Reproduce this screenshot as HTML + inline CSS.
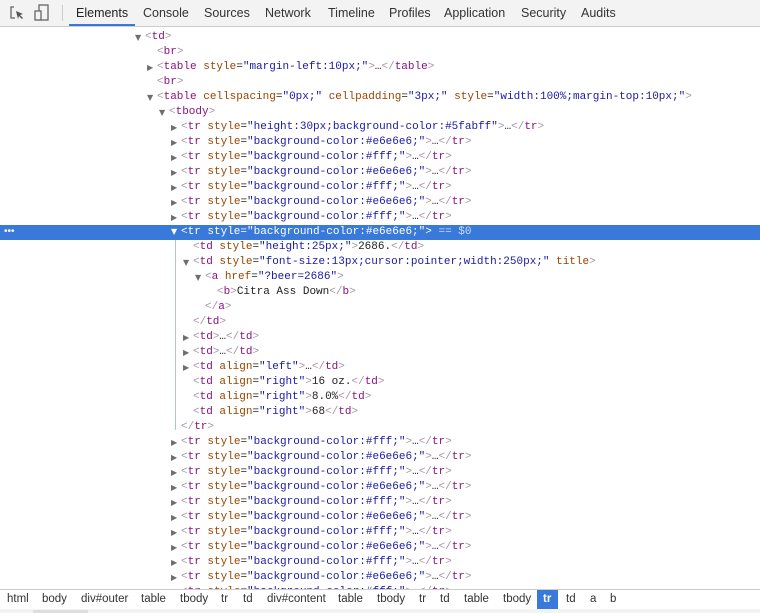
<!DOCTYPE html>
<html><head><meta charset="utf-8"><style>
body{margin:0;width:760px;height:613px;overflow:hidden;background:#fff;position:relative;font-family:"Liberation Sans",sans-serif}
#tabs{position:absolute;left:0;top:0;width:760px;height:26px;background:#f3f3f3;border-bottom:1px solid #ccc}
.tab{position:absolute;top:6px;font-size:12.5px;color:#333}
.l{position:absolute;font-family:"Liberation Mono",monospace;font-size:11px;line-height:15px;height:15px;white-space:pre;color:#222}
.g{color:#a894a6}.t{color:#881280}.a{color:#994500}.v{color:#1a1aa6}
.tri{position:absolute;font-size:8px;color:#6e6e6e;font-family:"DejaVu Sans",sans-serif}
#sel{position:absolute;left:0;top:225px;width:760px;height:15px;background:#3879d9}
#sel .l,#sel .l span{color:#fff}
#bar{position:absolute;left:0;top:589px;width:760px;height:19px;background:#fff;border-top:1px solid #ccc;border-bottom:1px solid #ccc}
.c{position:absolute;top:3px;font-size:11.5px;color:#333}
</style></head><body>
<div id="tabs">
<svg style="position:absolute;left:9px;top:5px" width="16" height="16" viewBox="0 0 16 16"><path d="M5 2H2v11h4" fill="none" stroke="#666" stroke-width="1.3"/><path d="M7 6l7 3-3 1 3 3-1 1-3-3-1 3z" fill="#555"/></svg>
<svg style="position:absolute;left:34px;top:4px" width="16" height="18" viewBox="0 0 16 18"><rect x="5" y="1" width="9" height="15" fill="none" stroke="#666" stroke-width="1.3"/><rect x="1" y="7" width="6" height="9" fill="#f3f3f3" stroke="#666" stroke-width="1.3"/></svg>
<div style="position:absolute;left:62px;top:5px;width:1px;height:16px;background:#ccc"></div>
<div class="tab" style="left:76px;color:#222">Elements</div>
<div style="position:absolute;left:69px;top:24px;width:66px;height:2px;background:#3879d9"></div>
<div class="tab" style="left:143px">Console</div>
<div class="tab" style="left:204px">Sources</div>
<div class="tab" style="left:265px">Network</div>
<div class="tab" style="left:328px">Timeline</div>
<div class="tab" style="left:389px">Profiles</div>
<div class="tab" style="left:444px">Application</div>
<div class="tab" style="left:521px">Security</div>
<div class="tab" style="left:581px">Audits</div>
</div>

<div id="sel"><div style="position:absolute;left:4px;top:0;color:#fff;font-size:10px;line-height:13px">•••</div>
<div class="tri" style="left:171px;top:2px;color:#fff">▼</div>
<div class="l" style="left:181px;top:0">&lt;tr style="<b style="font-weight:normal;color:#fff">background-color:#e6e6e6;</b>"&gt; <span style="color:#c9dbf5">== $0</span></div></div>
<div style="position:absolute;left:175px;top:240px;width:1px;height:190px;background:#a8c4ec"></div>

<div class="tri" style="left:135px;top:33px">▼</div>
<div class="l" style="left:145px;top:30px"><span class="g">&lt;</span><span class="t">td</span><span class="g">&gt;</span></div>
<div class="l" style="left:157px;top:45px"><span class="g">&lt;</span><span class="t">br</span><span class="g">&gt;</span></div>
<div class="tri" style="left:147px;top:63px">▶</div>
<div class="l" style="left:157px;top:60px"><span class="g">&lt;</span><span class="t">table</span> <span class="a">style</span>=<span class="v">"margin-left:10px;"</span><span class="g">&gt;</span>…<span class="g">&lt;/</span><span class="t">table</span><span class="g">&gt;</span></div>
<div class="l" style="left:157px;top:75px"><span class="g">&lt;</span><span class="t">br</span><span class="g">&gt;</span></div>
<div class="tri" style="left:147px;top:93px">▼</div>
<div class="l" style="left:157px;top:90px"><span class="g">&lt;</span><span class="t">table</span> <span class="a">cellspacing</span>=<span class="v">"0px;"</span> <span class="a">cellpadding</span>=<span class="v">"3px;"</span> <span class="a">style</span>=<span class="v">"width:100%;margin-top:10px;"</span><span class="g">&gt;</span></div>
<div class="tri" style="left:159px;top:108px">▼</div>
<div class="l" style="left:169px;top:105px"><span class="g">&lt;</span><span class="t">tbody</span><span class="g">&gt;</span></div>

<div class="tri" style="left:171px;top:123px">▶</div><div class="l" style="left:181px;top:120px"><span class="g">&lt;</span><span class="t">tr</span> <span class="a">style</span>=<span class="v">"height:30px;background-color:#5fabff"</span><span class="g">&gt;</span>…<span class="g">&lt;/</span><span class="t">tr</span><span class="g">&gt;</span></div>
<div class="tri" style="left:171px;top:138px">▶</div><div class="l" style="left:181px;top:135px"><span class="g">&lt;</span><span class="t">tr</span> <span class="a">style</span>=<span class="v">"background-color:#e6e6e6;"</span><span class="g">&gt;</span>…<span class="g">&lt;/</span><span class="t">tr</span><span class="g">&gt;</span></div>
<div class="tri" style="left:171px;top:153px">▶</div><div class="l" style="left:181px;top:150px"><span class="g">&lt;</span><span class="t">tr</span> <span class="a">style</span>=<span class="v">"background-color:#fff;"</span><span class="g">&gt;</span>…<span class="g">&lt;/</span><span class="t">tr</span><span class="g">&gt;</span></div>
<div class="tri" style="left:171px;top:168px">▶</div><div class="l" style="left:181px;top:165px"><span class="g">&lt;</span><span class="t">tr</span> <span class="a">style</span>=<span class="v">"background-color:#e6e6e6;"</span><span class="g">&gt;</span>…<span class="g">&lt;/</span><span class="t">tr</span><span class="g">&gt;</span></div>
<div class="tri" style="left:171px;top:183px">▶</div><div class="l" style="left:181px;top:180px"><span class="g">&lt;</span><span class="t">tr</span> <span class="a">style</span>=<span class="v">"background-color:#fff;"</span><span class="g">&gt;</span>…<span class="g">&lt;/</span><span class="t">tr</span><span class="g">&gt;</span></div>
<div class="tri" style="left:171px;top:198px">▶</div><div class="l" style="left:181px;top:195px"><span class="g">&lt;</span><span class="t">tr</span> <span class="a">style</span>=<span class="v">"background-color:#e6e6e6;"</span><span class="g">&gt;</span>…<span class="g">&lt;/</span><span class="t">tr</span><span class="g">&gt;</span></div>
<div class="tri" style="left:171px;top:213px">▶</div><div class="l" style="left:181px;top:210px"><span class="g">&lt;</span><span class="t">tr</span> <span class="a">style</span>=<span class="v">"background-color:#fff;"</span><span class="g">&gt;</span>…<span class="g">&lt;/</span><span class="t">tr</span><span class="g">&gt;</span></div>

<div class="l" style="left:193px;top:240px"><span class="g">&lt;</span><span class="t">td</span> <span class="a">style</span>=<span class="v">"height:25px;"</span><span class="g">&gt;</span>2686.<span class="g">&lt;/</span><span class="t">td</span><span class="g">&gt;</span></div>
<div class="tri" style="left:183px;top:258px">▼</div><div class="l" style="left:193px;top:255px"><span class="g">&lt;</span><span class="t">td</span> <span class="a">style</span>=<span class="v">"font-size:13px;cursor:pointer;width:250px;"</span> <span class="a">title</span><span class="g">&gt;</span></div>
<div class="tri" style="left:195px;top:273px">▼</div><div class="l" style="left:205px;top:270px"><span class="g">&lt;</span><span class="t">a</span> <span class="a">href</span>=<span class="v">"?beer=2686"</span><span class="g">&gt;</span></div>
<div class="l" style="left:217px;top:285px"><span class="g">&lt;</span><span class="t">b</span><span class="g">&gt;</span>Citra Ass Down<span class="g">&lt;/</span><span class="t">b</span><span class="g">&gt;</span></div>
<div class="l" style="left:205px;top:300px"><span class="g">&lt;/</span><span class="t">a</span><span class="g">&gt;</span></div>
<div class="l" style="left:193px;top:315px"><span class="g">&lt;/</span><span class="t">td</span><span class="g">&gt;</span></div>
<div class="tri" style="left:183px;top:333px">▶</div><div class="l" style="left:193px;top:330px"><span class="g">&lt;</span><span class="t">td</span><span class="g">&gt;</span>…<span class="g">&lt;/</span><span class="t">td</span><span class="g">&gt;</span></div>
<div class="tri" style="left:183px;top:348px">▶</div><div class="l" style="left:193px;top:345px"><span class="g">&lt;</span><span class="t">td</span><span class="g">&gt;</span>…<span class="g">&lt;/</span><span class="t">td</span><span class="g">&gt;</span></div>
<div class="tri" style="left:183px;top:363px">▶</div><div class="l" style="left:193px;top:360px"><span class="g">&lt;</span><span class="t">td</span> <span class="a">align</span>=<span class="v">"left"</span><span class="g">&gt;</span>…<span class="g">&lt;/</span><span class="t">td</span><span class="g">&gt;</span></div>
<div class="l" style="left:193px;top:375px"><span class="g">&lt;</span><span class="t">td</span> <span class="a">align</span>=<span class="v">"right"</span><span class="g">&gt;</span>16 oz.<span class="g">&lt;/</span><span class="t">td</span><span class="g">&gt;</span></div>
<div class="l" style="left:193px;top:390px"><span class="g">&lt;</span><span class="t">td</span> <span class="a">align</span>=<span class="v">"right"</span><span class="g">&gt;</span>8.0%<span class="g">&lt;/</span><span class="t">td</span><span class="g">&gt;</span></div>
<div class="l" style="left:193px;top:405px"><span class="g">&lt;</span><span class="t">td</span> <span class="a">align</span>=<span class="v">"right"</span><span class="g">&gt;</span>68<span class="g">&lt;/</span><span class="t">td</span><span class="g">&gt;</span></div>
<div class="l" style="left:181px;top:420px"><span class="g">&lt;/</span><span class="t">tr</span><span class="g">&gt;</span></div>

<div class="tri" style="left:171px;top:438px">▶</div><div class="l" style="left:181px;top:435px"><span class="g">&lt;</span><span class="t">tr</span> <span class="a">style</span>=<span class="v">"background-color:#fff;"</span><span class="g">&gt;</span>…<span class="g">&lt;/</span><span class="t">tr</span><span class="g">&gt;</span></div>
<div class="tri" style="left:171px;top:453px">▶</div><div class="l" style="left:181px;top:450px"><span class="g">&lt;</span><span class="t">tr</span> <span class="a">style</span>=<span class="v">"background-color:#e6e6e6;"</span><span class="g">&gt;</span>…<span class="g">&lt;/</span><span class="t">tr</span><span class="g">&gt;</span></div>
<div class="tri" style="left:171px;top:468px">▶</div><div class="l" style="left:181px;top:465px"><span class="g">&lt;</span><span class="t">tr</span> <span class="a">style</span>=<span class="v">"background-color:#fff;"</span><span class="g">&gt;</span>…<span class="g">&lt;/</span><span class="t">tr</span><span class="g">&gt;</span></div>
<div class="tri" style="left:171px;top:483px">▶</div><div class="l" style="left:181px;top:480px"><span class="g">&lt;</span><span class="t">tr</span> <span class="a">style</span>=<span class="v">"background-color:#e6e6e6;"</span><span class="g">&gt;</span>…<span class="g">&lt;/</span><span class="t">tr</span><span class="g">&gt;</span></div>
<div class="tri" style="left:171px;top:498px">▶</div><div class="l" style="left:181px;top:495px"><span class="g">&lt;</span><span class="t">tr</span> <span class="a">style</span>=<span class="v">"background-color:#fff;"</span><span class="g">&gt;</span>…<span class="g">&lt;/</span><span class="t">tr</span><span class="g">&gt;</span></div>
<div class="tri" style="left:171px;top:513px">▶</div><div class="l" style="left:181px;top:510px"><span class="g">&lt;</span><span class="t">tr</span> <span class="a">style</span>=<span class="v">"background-color:#e6e6e6;"</span><span class="g">&gt;</span>…<span class="g">&lt;/</span><span class="t">tr</span><span class="g">&gt;</span></div>
<div class="tri" style="left:171px;top:528px">▶</div><div class="l" style="left:181px;top:525px"><span class="g">&lt;</span><span class="t">tr</span> <span class="a">style</span>=<span class="v">"background-color:#fff;"</span><span class="g">&gt;</span>…<span class="g">&lt;/</span><span class="t">tr</span><span class="g">&gt;</span></div>
<div class="tri" style="left:171px;top:543px">▶</div><div class="l" style="left:181px;top:540px"><span class="g">&lt;</span><span class="t">tr</span> <span class="a">style</span>=<span class="v">"background-color:#e6e6e6;"</span><span class="g">&gt;</span>…<span class="g">&lt;/</span><span class="t">tr</span><span class="g">&gt;</span></div>
<div class="tri" style="left:171px;top:558px">▶</div><div class="l" style="left:181px;top:555px"><span class="g">&lt;</span><span class="t">tr</span> <span class="a">style</span>=<span class="v">"background-color:#fff;"</span><span class="g">&gt;</span>…<span class="g">&lt;/</span><span class="t">tr</span><span class="g">&gt;</span></div>
<div class="tri" style="left:171px;top:573px">▶</div><div class="l" style="left:181px;top:570px"><span class="g">&lt;</span><span class="t">tr</span> <span class="a">style</span>=<span class="v">"background-color:#e6e6e6;"</span><span class="g">&gt;</span>…<span class="g">&lt;/</span><span class="t">tr</span><span class="g">&gt;</span></div>
<div class="l" style="left:181px;top:585px"><span class="g">&lt;</span><span class="t">tr</span> <span class="a">style</span>=<span class="v">"background-color:#fff;"</span><span class="g">&gt;</span>…<span class="g">&lt;/</span><span class="t">tr</span><span class="g">&gt;</span></div>

<div id="bar">
<div class="c" style="left:7px">html</div>
<div class="c" style="left:42px">body</div>
<div class="c" style="left:81px">div#outer</div>
<div class="c" style="left:141px">table</div>
<div class="c" style="left:180px">tbody</div>
<div class="c" style="left:221px">tr</div>
<div class="c" style="left:243px">td</div>
<div class="c" style="left:267px">div#content</div>
<div class="c" style="left:338px">table</div>
<div class="c" style="left:377px">tbody</div>
<div class="c" style="left:419px">tr</div>
<div class="c" style="left:440px">td</div>
<div class="c" style="left:464px">table</div>
<div class="c" style="left:503px">tbody</div>
<div style="position:absolute;left:537px;top:0;width:21px;height:19px;background:#3879d9"></div>
<div class="c" style="left:543px;color:#fff;font-weight:bold">tr</div>
<div class="c" style="left:566px">td</div>
<div class="c" style="left:590px">a</div>
<div class="c" style="left:610px">b</div>
</div>
<div style="position:absolute;left:0;top:609px;width:760px;height:4px;background:#f3f3f3"></div>
<div style="position:absolute;left:33px;top:610px;width:55px;height:3px;background:#ddd"></div>
</body></html>
